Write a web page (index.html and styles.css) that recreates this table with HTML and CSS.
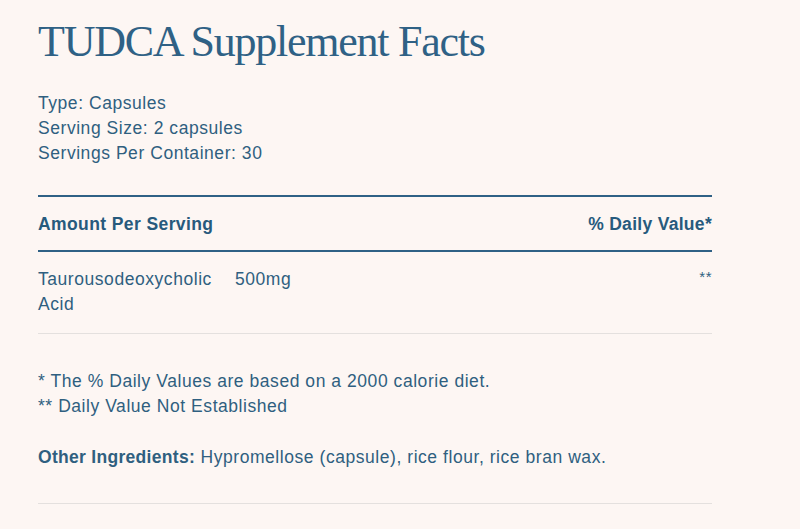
FILE: index.html
```html
<!DOCTYPE html>
<html>
<head>
<meta charset="utf-8">
<link rel="stylesheet" href="styles.css">
</head>
<body>
<main class="facts">
  <h1 class="title">TUDCA Supplement Facts</h1>
  <div class="meta">
    <p>Type: Capsules</p>
    <p>Serving Size: 2 capsules</p>
    <p>Servings Per Container: 30</p>
  </div>
  <div class="table">
    <div class="head">
      <span>Amount Per Serving</span>
      <span>% Daily Value*</span>
    </div>
    <div class="row">
      <span class="name">Taurousodeoxycholic Acid</span>
      <span class="amt">500mg</span>
      <span class="dv">**</span>
    </div>
  </div>
  <div class="notes">
    <p>* The % Daily Values are based on a 2000 calorie diet.</p>
    <p>** Daily Value Not Established</p>
  </div>
  <p class="other"><strong>Other Ingredients:</strong> Hypromellose (capsule), rice flour, rice bran wax.</p>
  <div class="rule"></div>
</main>
</body>
</html>
```
FILE: styles.css
```css
html, body {
  margin: 0;
  padding: 0;
  background: #fdf6f3;
}
body {
  font-family: "Liberation Sans", Arial, sans-serif;
  color: #2f5f80;
  font-size: 17.5px;
  letter-spacing: 0.55px;
  line-height: 25px;
}
.facts {
  width: 674px;
  padding: 17px 0 0 38px;
}
p { margin: 0; }
.title {
  font-family: "Liberation Serif", serif;
  font-weight: normal;
  font-size: 44px;
  letter-spacing: -1.25px;
  line-height: 50px;
  margin: 0 0 23.5px;
  color: #2f6185;
}
.meta { margin-bottom: 29.5px; }
.table { border-top: 2px solid #2f6185; }
.head {
  display: flex;
  justify-content: space-between;
  font-weight: bold;
  letter-spacing: 0.4px;
  padding: 14.5px 0 13.5px;
  border-bottom: 2px solid #2f6185;
  color: #275a7d;
}
.head span:last-child { letter-spacing: 0.3px; }
.row {
  display: grid;
  grid-template-columns: 197px 1fr auto;
  padding: 14.5px 0 16px;
  border-bottom: 1px solid #e4e0de;
}
.name { padding-right: 12px; }
.dv { font-size: 15px; line-height: 20px; letter-spacing: 0.5px; }
.notes { margin-top: 35px; }
.other { margin-top: 26px; }
.other strong { font-weight: bold; letter-spacing: 0.3px; }
.rule {
  margin-top: 33px;
  border-top: 1px solid #e4e0de;
}
```
